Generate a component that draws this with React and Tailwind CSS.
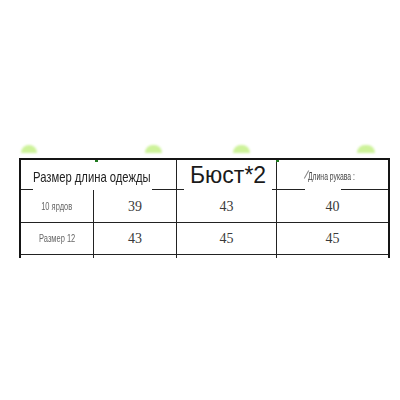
import React from 'react'

const rows = [
  { label: "10 ярдов", a: "39", b: "43", c: "40" },
  { label: "Размер 12", a: "43", b: "45", c: "45" },
  { label: "", a: "", b: "", c: "" },
]

const Seg = ({ w }) => <span className={`${w} shrink-0 border-b border-[#222] self-end`} />

const App = () => {
  return (
    <div className="w-[400px] h-[400px] bg-white overflow-hidden pt-[145px] font-['Liberation_Sans',sans-serif]">
      {/* faded green marks above the sheet */}
      <div className="flex h-[8px] pl-[21px]">
        <span className="w-[16px] h-[8px] rounded-t-full bg-[#cdf29a] blur-[1px]" />
        <span className="w-[17px] h-[8px] rounded-t-full bg-[#cdf29a] blur-[1px] ml-[108px]" />
        <span className="w-[17px] h-[8px] rounded-t-full bg-[#cdf29a] blur-[1px] ml-[71px]" />
        <span className="w-[18px] h-[8px] rounded-t-full bg-[#cdf29a] blur-[1px] ml-[107px]" />
      </div>

      <div className="mt-[5px] ml-[19px] w-[371px] h-[100px] overflow-hidden border-t-2 border-x-2 border-[#151515] relative">
        <span className="absolute left-[74px] -top-[1px] w-[3px] h-[3px] bg-[#1f7a1f]" />
        <span className="absolute left-[255px] -top-[1px] w-[3px] h-[3px] bg-[#1f7a1f]" />

        {/* header */}
        <div className="flex h-[30px]">
          <div className="w-[156px] shrink-0 flex border-r border-[#222]">
            <Seg w="w-[12px]" />
            <div className="flex-1 min-w-0 flex items-center pt-[4px]">
              <span className="inline-block origin-left scale-x-[0.75] text-[15px] text-[#222] whitespace-nowrap">Размер длина одежды</span>
            </div>
            <Seg w="w-[24px]" />
          </div>
          <div className="w-[100px] shrink-0 flex border-r border-[#222]">
            <Seg w="w-[7px]" />
            <div className="flex-1 min-w-0 flex items-center pl-[6px]">
              <span className="text-[23px] text-[#1a1a1a] leading-none whitespace-nowrap">Бюст*2</span>
            </div>
            <Seg w="w-[4px]" />
          </div>
          <div className="flex-1 flex">
            <Seg w="w-[28px]" />
            <div className="w-[36px] shrink-0 flex items-center pt-[3px] pl-[3px] relative">
              <span className="absolute left-[1px] top-[10px] w-[1px] h-[9px] bg-[#888] rotate-[30deg]" />
              <span className="inline-block origin-left scale-x-[0.68] text-[10px] text-[#444] whitespace-nowrap">Длина рукава :</span>
            </div>
            <Seg w="flex-1" />
          </div>
        </div>

        {/* body */}
        {rows.map((r, i) => (
          <div key={i} className={`flex h-[32px] ${i === 0 ? "" : "border-t border-[#222]"}`}>
            <div className="w-[73px] border-r border-[#222] flex items-center justify-center">
              <span className="inline-block scale-x-[0.75] text-[10px] text-[#666] whitespace-nowrap">{r.label}</span>
            </div>
            <div className="w-[83px] border-r border-[#222] flex items-center justify-center text-[14px] text-[#3a3a3a] font-['Liberation_Serif',serif]">{r.a}</div>
            <div className="w-[100px] border-r border-[#222] flex items-center justify-center text-[14px] text-[#3a3a3a] font-['Liberation_Serif',serif]">{r.b}</div>
            <div className="flex-1 flex items-center justify-center text-[14px] text-[#3a3a3a] font-['Liberation_Serif',serif]">{r.c}</div>
          </div>
        ))}
      </div>
    </div>
  )
}

export default App
